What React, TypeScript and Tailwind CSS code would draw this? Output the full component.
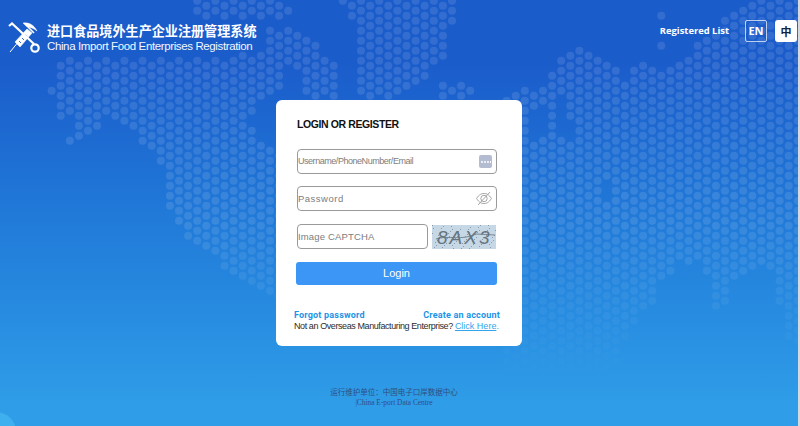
import { useMemo } from "react";

type Pt = [number, number];

// rough outlines of the dotted world map behind the page
const land: Pt[][] = [
  [[47, 88], [58, 78], [58, 58], [280, 55], [280, 95], [258, 100], [258, 112], [247, 118], [258, 135], [265, 145], [280, 150], [280, 300], [272, 296], [225, 271], [212, 256], [195, 247], [176, 225], [167, 210], [167, 177], [158, 160], [148, 149], [139, 146], [137, 130], [116, 120], [108, 114], [101, 130], [92, 135], [68, 146], [66, 136], [76, 130], [72, 120], [58, 118], [58, 97], [47, 95]],
  [[190, -5], [275, -5], [292, 5], [292, 18], [255, 20], [190, 20]],
  [[265, 25], [300, 28], [320, 40], [320, 55], [330, 58], [338, 72], [338, 100], [305, 100], [300, 75], [285, 58], [265, 58]],
  [[338, -5], [455, -5], [456, 25], [447, 35], [447, 60], [430, 66], [420, 85], [400, 95], [400, 100], [355, 100], [355, 55], [356, 20], [346, 18], [346, 5]],
  [[438, 82], [473, 82], [473, 100], [438, 100]],
  [[505, 100], [520, 88], [545, 88], [551, 72], [565, 52], [578, 46], [590, 52], [620, 72], [620, 90], [638, 62], [648, 68], [664, 72], [672, 60], [690, 56], [692, 42], [706, 36], [720, 22], [745, 0], [805, 0], [805, 345], [784, 340], [784, 305], [773, 305], [773, 270], [764, 262], [748, 268], [746, 277], [735, 282], [728, 308], [711, 308], [711, 275], [695, 262], [675, 258], [673, 275], [656, 285], [656, 306], [640, 312], [628, 330], [620, 360], [600, 380], [505, 380]],
  [[656, 11], [665, 11], [665, 19], [656, 19]],
  [[656, 41], [665, 41], [665, 49], [656, 49]],
];

const holes: Pt[][] = [
  [[556, 95], [566, 95], [566, 112], [575, 120], [575, 135], [556, 140]],
  [[526, 108], [546, 108], [546, 135], [533, 140], [526, 140]],
  [[600, 178], [615, 178], [615, 196], [600, 196]],
];

function inside(x: number, y: number, poly: Pt[]) {
  let hit = false;
  for (let i = 0, j = poly.length - 1; i < poly.length; j = i++) {
    const [xi, yi] = poly[i];
    const [xj, yj] = poly[j];
    if (yi > y !== yj > y && x < ((xj - xi) * (y - yi)) / (yj - yi) + xi) hit = !hit;
  }
  return hit;
}

function WorldDots() {
  const dots = useMemo(() => {
    const out: { x: number; y: number; o: number }[] = [];
    for (let k = -2; k < 82; k++) {
      const x = 60.7 + k * 9.1;
      for (let n = -7; n < 33; n++) {
        const y = 65.7 + n * 10 + (k % 2 ? 5 : 0);
        if (!land.some((p) => inside(x, y, p))) continue;
        if (holes.some((p) => inside(x, y, p))) continue;
        // the map fades out towards the bottom
        const o = y < 220 ? 0.11 : Math.max(0, 0.11 * (1 - (y - 220) / 160));
        out.push({ x, y, o });
      }
    }
    return out;
  }, []);

  return (
    <svg className="absolute inset-0 h-full w-full" viewBox="0 0 800 426">
      {dots.map((d) => (
        <circle key={`${d.x}-${d.y}`} cx={d.x} cy={d.y} r={4} fill="#fff" fillOpacity={d.o} />
      ))}
    </svg>
  );
}

function Logo() {
  return (
    <svg width="32" height="32" viewBox="0 0 32 32" fill="none" stroke="#fff" className="shrink-0">
      {/* syringe */}
      <path d="M2 30 L9 21.5" strokeWidth="1" />
      <path d="M7 20 L12 25 L24 11 L19 7 Z" fill="#fff" strokeWidth="0.6" />
      <path d="M20 5 L26 11" strokeWidth="1.6" />
      <path d="M11 19 l2 2 M14 16 l2 2 M17 12.5 l2 2" stroke="#1c5fcc" strokeWidth="0.9" />
      {/* hook at the top */}
      <path d="M15 1 C21 0 26 3 29 9 C25 6 22 5 19 5 Z" fill="#fff" strokeWidth="0.4" />
      {/* key */}
      <path d="M1 4 L4 1.5 L26 22" strokeWidth="2.2" />
      <circle cx="27" cy="26" r="3.7" strokeWidth="2.2" />
    </svg>
  );
}

function DotsKey() {
  return (
    <span className="flex h-[13px] w-[13px] items-center justify-center gap-px rounded-[2px] bg-[#b3bcd0]">
      <span className="h-[2px] w-[2px] rounded-full bg-white" />
      <span className="h-[2px] w-[2px] rounded-full bg-white" />
      <span className="h-[2px] w-[2px] rounded-full bg-white" />
      <span className="h-[2px] w-[1px] bg-white" />
    </span>
  );
}

function EyeOff() {
  return (
    <svg width="16" height="15" viewBox="0 0 16 15" fill="none" stroke="#9c9c9c" strokeWidth="0.9">
      <path d="M0.6 7.5 C3 3.5 5.5 2.5 8 2.5 C10.5 2.5 13 3.5 15.4 7.5 C13 11.5 10.5 12.5 8 12.5 C5.5 12.5 3 11.5 0.6 7.5 Z" />
      <circle cx="8" cy="7.5" r="3.2" />
      <path d="M2 14 L14 1" />
    </svg>
  );
}

function Captcha() {
  return (
    <svg width="64" height="24" viewBox="0 0 64 24" className="ml-1 shrink-0 bg-[#c6d8e6]">
      {Array.from({ length: 70 }, (_, i) => (
        <rect key={i} x={(i * 37) % 64} y={(i * 23) % 24} width="1" height="1" fill="#8b9aa8" />
      ))}
      <text x="5" y="19" fontFamily="Liberation Sans, sans-serif" fontStyle="italic" fontSize="19" letterSpacing="2" fill="#66747f">
        8AX3
      </text>
      <path d="M4 14 C16 10 30 16 44 9 L63 10" stroke="#66747f" strokeWidth="0.8" fill="none" />
    </svg>
  );
}

function Field({ placeholder, icon, className, textClass }: { placeholder: string; icon?: React.ReactNode; className: string; textClass: string }) {
  return (
    <div className={`flex h-[25px] items-center rounded-[4px] border border-[#9a9a9a] bg-white pr-1 ${className}`}>
      <input
        placeholder={placeholder}
        className={`mt-px min-w-0 flex-1 bg-transparent font-['Liberation_Sans',sans-serif] outline-none placeholder:text-[#7d7d7d] ${textClass}`}
      />
      {icon}
    </div>
  );
}

export default function App() {
  return (
    <div className="relative h-[426px] w-full overflow-hidden bg-gradient-to-b from-[#1b5ccb] from-15% to-[#2f9de8] to-95% font-['Liberation_Sans',sans-serif]">
      <WorldDots />
      <div className="absolute -bottom-[26px] -left-[24px] h-10 w-10 rounded-full bg-[#3fb0ef]" />
      <div className="absolute inset-y-0 right-0 w-[2px] bg-[#d6dae0]" />

      <div className="relative flex flex-col">
        <header className="flex h-[100px] items-start justify-between pl-2 pr-[3px] pt-[22px]">
          <div className="flex items-center gap-[7px]">
            <Logo />
            <div className="flex flex-col">
              <span className="font-['Noto_Sans_CJK_SC',sans-serif] text-[13.1px] font-bold leading-[16px] text-white">
                进口食品境外生产企业注册管理系统
              </span>
              <span className="text-[11.5px] leading-[15px] tracking-[-0.38px] text-[#f2f6ff]">China Import Food Enterprises Registration</span>
            </div>
          </div>
          <div className="-mt-0.5 flex items-center">
            <span className="mr-4 font-['Open_Sans',sans-serif] text-[9.4px] font-bold text-white">Registered List</span>
            <span className="flex h-[22px] w-[22px] items-center justify-center rounded-[2px] border border-white/70 font-['Open_Sans',sans-serif] text-[11px] font-bold text-white">
              EN
            </span>
            <span className="ml-2 flex h-[22px] w-[22px] items-center justify-center rounded-[3px] bg-white font-['Noto_Sans_CJK_SC',sans-serif] text-[11px] font-bold text-[#14233c]">
              中
            </span>
          </div>
        </header>

        <main className="flex justify-center">
          <div className="mr-[2px] h-[246px] w-[246px] rounded-[6px] bg-white pl-[21px] pr-[25px] pt-[17px]">
            <h1 className="text-[10.5px] font-bold leading-[14px] tracking-[-0.4px] text-[#111]">LOGIN OR REGISTER</h1>
            <Field placeholder="Username/PhoneNumber/Email" icon={<DotsKey />} className="mt-[18px] w-[200px]" textClass="text-[9px] tracking-[-0.46px]" />
            <Field placeholder="Password" icon={<EyeOff />} className="mt-3 w-[200px]" textClass="text-[9.5px] tracking-[0.5px]" />
            <div className="mt-[13px] flex items-center">
              <Field placeholder="Image CAPTCHA" className="w-[131px]" textClass="text-[9.5px] tracking-[0.15px]" />
              <Captcha />
            </div>
            <button className="-ml-px mt-[13px] block h-[23px] w-[201px] rounded-[3px] bg-[#3b96f6] text-[11px] text-white">Login</button>
            <div className="-mx-[3px] mt-6 flex justify-between font-['Roboto',sans-serif] text-[9px] font-bold leading-[12px] tracking-[0.2px] text-[#1a94e8]">
              <a>Forgot password</a>
              <a>Create an account</a>
            </div>
            <p className="-mx-[3px] -mt-px whitespace-nowrap text-[9px] leading-[12px] text-[#2b2b2b]">
              <span className="tracking-[-0.41px]">Not an Overseas Manufacturing Enterprise? </span>
              <a className="text-[#35a4ea] underline">Click Here</a>
              <span className="text-[#35a4ea]">.</span>
            </p>
          </div>
        </main>

        <footer className="mr-3 mt-[40px] flex flex-col items-center text-[#2f4f80]">
          <span className="font-['Noto_Sans_CJK_SC',sans-serif] text-[7.5px] leading-[12px]">运行维护单位：中国电子口岸数据中心</span>
          <span className="font-['Liberation_Serif',serif] text-[7.4px] leading-[9px]">|China E-port Data Centre</span>
        </footer>
      </div>
    </div>
  );
}
